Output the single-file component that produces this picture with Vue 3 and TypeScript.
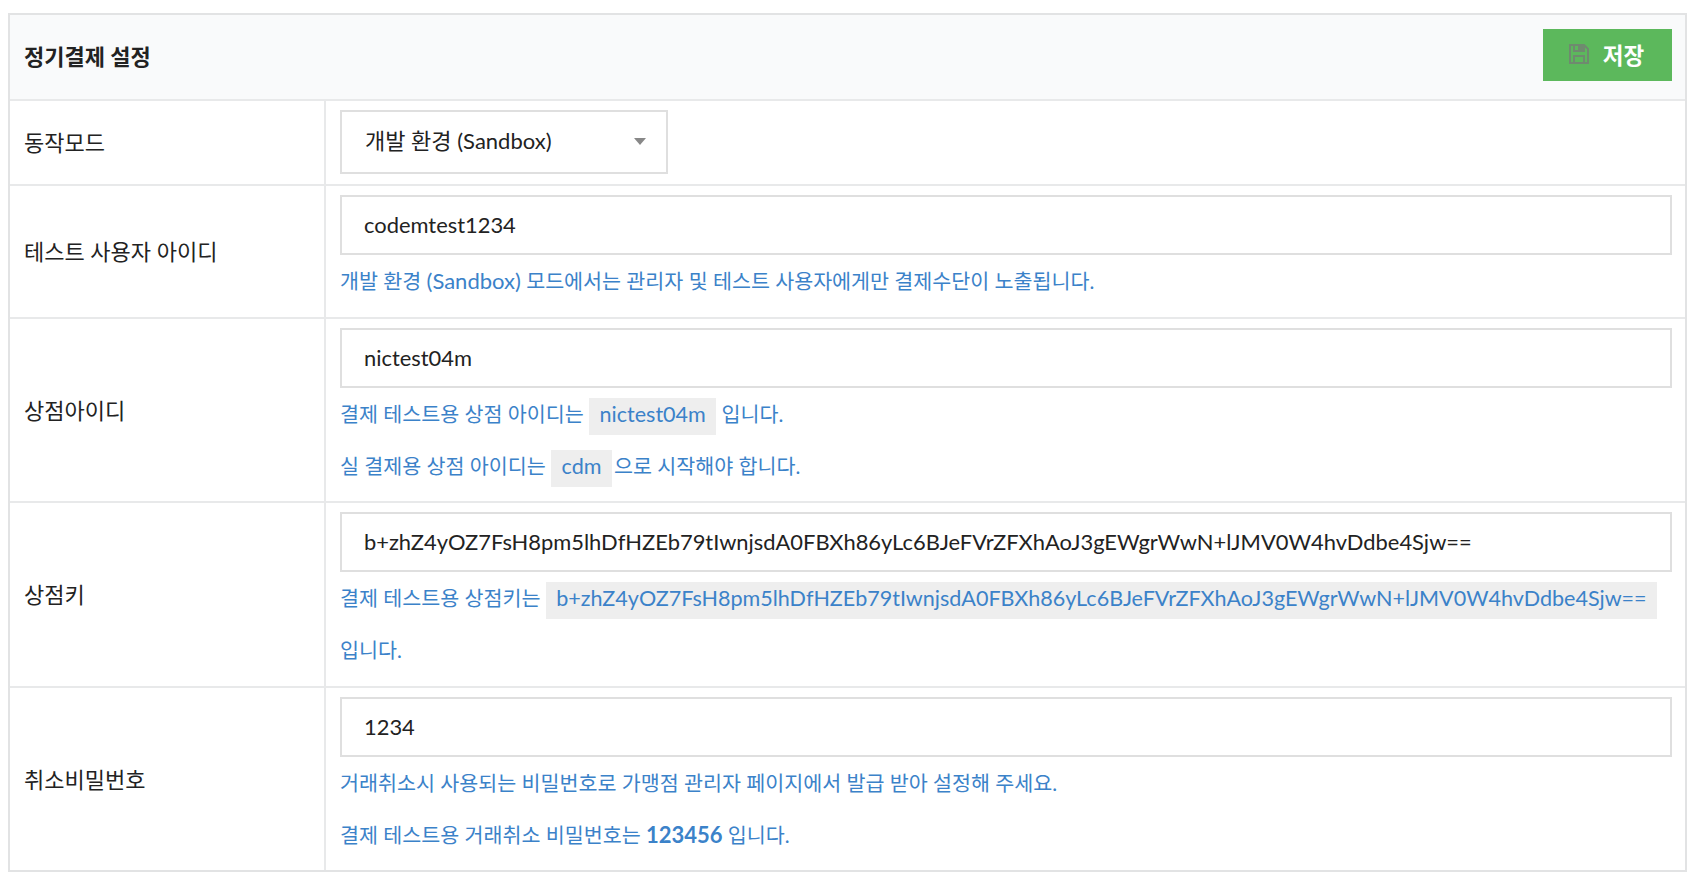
<script setup lang="ts">
const KEY = 'b+zhZ4yOZ7FsH8pm5lhDfHZEb79tIwnjsdA0FBXh86yLc6BJeFVrZFXhAoJ3gEWgrWwN+lJMV0W4hvDdbe4Sjw=='
</script>

<template>
  <div class="panel">
    <div class="head">
      <h2 class="title">정기결제 설정</h2>
      <button class="save" type="button">
        <svg class="ico" width="20" height="20" viewBox="0 0 20 20" fill="none" stroke="#6f8a6f" stroke-width="2">
          <path d="M1 1h14l4 4v14H1z" />
          <path d="M5 1v6h10V1" />
          <path d="M5 19v-7h10v7" />
          <rect x="9" y="1" width="5" height="6" fill="#6f8a6f" stroke="none" />
        </svg>
        <span>저장</span>
      </button>
    </div>

    <div class="row">
      <div class="label">동작모드</div>
      <div class="cell">
        <div class="select-wrap">
          <select class="select">
            <option>개발 환경 (Sandbox)</option>
          </select>
          <span class="arrow"></span>
        </div>
      </div>
    </div>

    <div class="row">
      <div class="label">테스트 사용자 아이디</div>
      <div class="cell roomy">
        <input class="input" value="codemtest1234" />
        <p class="help">개발 환경 <span class="latin">(Sandbox)</span> 모드에서는 관리자 및 테스트 사용자에게만 결제수단이 노출됩니다.</p>
      </div>
    </div>

    <div class="row">
      <div class="label">상점아이디</div>
      <div class="cell">
        <input class="input" value="nictest04m" />
        <p class="help">결제 테스트용 상점 아이디는 <code class="chip">nictest04m</code> 입니다.</p>
        <p class="help">실 결제용 상점 아이디는 <code class="chip tight">cdm</code>으로 시작해야 합니다.</p>
      </div>
    </div>

    <div class="row">
      <div class="label">상점키</div>
      <div class="cell roomy">
        <input class="input" :value="KEY" />
        <p class="help">결제 테스트용 상점키는 <code class="chip">{{ KEY }}</code> 입니다.</p>
      </div>
    </div>

    <div class="row">
      <div class="label">취소비밀번호</div>
      <div class="cell">
        <input class="input" value="1234" />
        <p class="help">거래취소시 사용되는 비밀번호로 가맹점 관리자 페이지에서 발급 받아 설정해 주세요.</p>
        <p class="help">결제 테스트용 거래취소 비밀번호는 <strong>123456</strong> 입니다.</p>
      </div>
    </div>
  </div>
</template>

<style>
html, body { background: #fff; }
</style>

<style scoped>
.panel {
  box-sizing: border-box;
  width: 1679px;
  margin: 13px 0 0 8px;
  border: 2px solid #e2e3e4;
  font-family: Lato, "Noto Sans CJK KR", sans-serif;
  font-size: 22px;
  color: #222;
}
.head {
  height: 84px;
  background: #f9fafb;
  display: flex;
  align-items: center;
  justify-content: space-between;
  padding: 0 13px 0 14px;
}
.title { margin: 0 0 5px; font-size: 22px; font-weight: 700; color: #222; }
.save {
  width: 129px;
  height: 52px;
  margin-top: -4px;
  padding: 0 0 3px;
  border: 0;
  background: #5cb85c;
  color: #fff;
  font: 700 22.5px Lato, "Noto Sans CJK KR", sans-serif;
  display: flex;
  align-items: center;
  justify-content: center;
  gap: 14px;
}
.ico { margin-left: -2px; }
.row {
  display: flex;
  border-top: 2px solid #e8e9ea;
}
.label {
  box-sizing: border-box;
  flex: 0 0 316px;
  padding: 0 0 3px 14px;
  border-right: 2px solid #e8e9ea;
  display: flex;
  align-items: center;
}
.cell {
  flex: 1;
  min-width: 0;
  padding: 9px 13px 9px 14px;
}
.cell.roomy { padding-bottom: 10px; }
.select-wrap { position: relative; width: 328px; height: 64px; margin-bottom: 1px; }
.select {
  box-sizing: border-box;
  width: 100%;
  height: 100%;
  padding: 0 0 3px 23px;
  appearance: none;
  background: #fff;
  border: 2px solid #dfdfdf;
  border-radius: 0;
  font: inherit;
  color: #222;
}
.arrow {
  position: absolute;
  right: 22px;
  top: 28px;
  border-style: solid;
  border-width: 7px 6px 0;
  border-color: #888 transparent transparent;
}
.input {
  box-sizing: border-box;
  display: block;
  width: 100%;
  height: 60px;
  padding: 0 22px 2px;
  background: #fff;
  border: 2px solid #dfdfdf;
  border-radius: 0;
  outline: 0;
  font: inherit;
  font-size: 21.9px;
  color: #222;
}
.help {
  margin: 0;
  line-height: 52px;
  font-size: 20.65px;
  color: #3b82c9;
}
.latin { font-size: 22px; }
.help strong { font-size: 22px; }
.chip {
  display: inline-block;
  vertical-align: middle;
  height: 37px;
  padding: 0 10.5px;
  background: #eee;
  font: inherit;
  font-size: 21.55px;
  line-height: 33px;
}
.tight { margin-right: 2px; }
</style>
